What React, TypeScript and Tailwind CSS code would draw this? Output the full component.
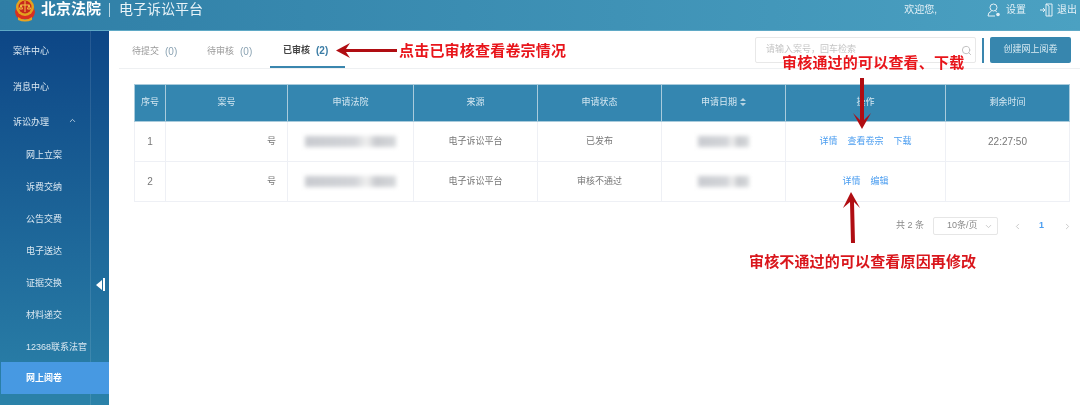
import { ChevronDown, ChevronLeft, ChevronRight, ChevronUp, Search } from "lucide-react";

const menu = ["网上立案", "诉费交纳", "公告交费", "电子送达", "证据交换", "材料递交", "12368联系法官"];

const columns = [
  { label: "序号", width: "w-[31px]" },
  { label: "案号", width: "w-[122px]" },
  { label: "申请法院", width: "w-[126px]" },
  { label: "来源", width: "w-[124px]" },
  { label: "申请状态", width: "w-[124px]" },
  { label: "申请日期", width: "w-[124px]" },
  { label: "操作", width: "w-[160px]" },
  { label: "剩余时间", width: "w-[124px]" },
];

const rows = [
  { id: 1, status: "已发布", links: ["详情", "查看卷宗", "下载"], time: "22:27:50" },
  { id: 2, status: "审核不通过", links: ["详情", "编辑"], time: "" },
];

const Emblem = () => (
  <svg viewBox="0 0 22 24" className="w-[22px] h-[24px] shrink-0">
    <path d="M3 6 L1 14 Q2 20 6 21 L16 21 Q20 20 21 14 L19 6 Z" fill="#d9301f" />
    <circle cx="11" cy="9" r="9" fill="#e3a21f" />
    <circle cx="11" cy="9" r="6.5" fill="#c8281c" />
    <path d="M11 3 V14 M6.5 7 H15.5 M7 7 L5.5 11 H8.5 Z M15 7 L13.5 11 H16.5 Z" stroke="#f4c542" strokeWidth="1" fill="none" />
    <path d="M4 19 Q11 24 18 19 L18 22 Q11 25 4 22 Z" fill="#e9a41f" />
  </svg>
);

const UserIcon = () => (
  <svg viewBox="0 0 14 14" className="w-[14px] h-[14px] mr-[5px]" fill="none" stroke="#e3f0f6" strokeWidth="1">
    <circle cx="6.5" cy="4.5" r="3.5" />
    <path d="M1 13 Q1 9 4.5 8.2 M8.5 8.2 Q9.5 8.5 10 9 M1 13 H8" />
    <circle cx="11" cy="11.5" r="1.8" fill="#e3f0f6" stroke="none" />
  </svg>
);

const ExitIcon = () => (
  <svg viewBox="0 0 13 14" className="w-[13px] h-[14px] mr-[4px]" fill="none" stroke="#e3f0f6" strokeWidth="1">
    <path d="M6 1 H12 V13 H6 Z M6 1 L9 3 V13" />
    <path d="M0 7 H5 M3 5 L5 7 L3 9" />
  </svg>
);

const SortIcon = () => (
  <svg viewBox="0 0 6 8" className="inline-block w-[6px] h-[8px] ml-[3px] mb-px" fill="#b8d4e2">
    <path d="M3 0 L6 3 H0 Z M3 8 L0 5 H6 Z" />
  </svg>
);

const Blur = ({ w }: { w: string }) => (
  <div className={`${w} h-[11px] mx-auto bg-[linear-gradient(90deg,#c9cbd0_0%,#d2d4d8_55%,#f0f0f0_68%,#c8cace_78%,#d6d8db_100%)] blur-[2px]`} />
);

const App = () => {
  return (
    <div className="relative w-[1080px] h-[405px] overflow-hidden bg-white text-[9px] text-[#777] blur-[0.3px] font-['Liberation_Sans','Noto_Sans_CJK_SC',sans-serif]">
      <header className="h-[31px] flex items-center justify-between pl-[14px] pr-[3px] pb-[11px] bg-[linear-gradient(90deg,#2f7ea6,#4ba1c2)] border-b border-[#5fa9c6] text-white">
        <div className="flex items-center">
          <Emblem />
          <span className="ml-[5px] text-[15px] font-bold">北京法院</span>
          <span className="ml-[8px] mr-[9px] w-px h-[14px] bg-[#b8d8e6]" />
          <span className="text-[14px] text-[#e8f3f8]">电子诉讼平台</span>
        </div>
        <div className="flex items-center text-[10px] text-[#e3f0f6]">
          <span className="mr-[50px]">欢迎您,</span>
          <UserIcon />
          <span className="mr-[14px]">设置</span>
          <ExitIcon />
          <span>退出</span>
        </div>
      </header>

      <div className="flex h-[374px]">
        <aside className="relative w-[109px] shrink-0 pl-px bg-[linear-gradient(180deg,#0d4686,#2b82a9)] text-[#dbe8f2]">
          <div className="absolute top-0 bottom-0 left-[90px] w-px bg-white/10" />
          <div className="h-[37px] pl-[12px] pt-[2px] mt-px flex items-center">案件中心</div>
          <div className="h-[36px] pl-[12px] pt-[2px] flex items-center">消息中心</div>
          <div className="h-[33px] pl-[12px] pt-[3px] flex items-center">
            诉讼办理
            <ChevronUp size={9} className="ml-[19px] mb-[5px]" />
          </div>
          {menu.map((item) => (
            <div key={item} className="h-[32px] pl-[25px] pt-[4px] flex items-center whitespace-nowrap">
              {item}
            </div>
          ))}
          <div className="relative h-[32px] pl-[25px] pt-[2px] flex items-center bg-[#4799e2] text-white font-bold">网上阅卷</div>
          <div className="absolute left-[96px] top-[247px] flex items-center gap-px">
            <div className="border-y-[5px] border-y-transparent border-r-[6px] border-r-white" />
            <div className="w-[2px] h-[13px] bg-white" />
          </div>
        </aside>

        <main className="flex-1 min-w-0">
          <div className="h-[38px] ml-[10px] flex items-start justify-between border-b border-[#eef0f2] pr-[9px]">
            <div className="flex pt-[6px] text-[#9a9a9a]">
              <div className="h-[31px] w-[75px] pl-[13px] pb-[2px] flex items-center">待提交<span className="ml-[6px] text-[10px] text-[#8ba3b3]">(0)</span></div>
              <div className="h-[31px] w-[76px] pl-[13px] pb-[2px] flex items-center">待审核<span className="ml-[6px] text-[10px] text-[#8ba3b3]">(0)</span></div>
              <div className="h-[31px] w-[75px] pl-[13px] pb-[2px] flex items-center border-b-[2px] border-[#3a86ae] text-[#444] font-bold">已审核<span className="ml-[6px] text-[10px] text-[#3a7ca5]">(2)</span></div>
            </div>
            <div className="flex items-center pt-[6px]">
              <div className="w-[221px] h-[26px] flex items-center justify-between pl-[10px] pr-[3px] border border-[#e8e8e8] rounded-[2px] text-[#c4c4c4]">
                请输入案号，回车检索
                <Search size={11} className="text-[#bbb]" />
              </div>
              <div className="ml-[6px] w-[2px] h-[25px] bg-[#3a86ae]" />
              <button className="ml-[6px] w-[81px] h-[26px] rounded-[2px] bg-[#3786ae] text-[#d9ebf3]">创建网上阅卷</button>
            </div>
          </div>

          <div className="ml-[25px] mt-[15px] w-[936px]">
            <table className="w-full table-fixed border-collapse">
              <thead>
                <tr className="h-[37px] bg-[#3486b0] text-[#d6e8f2]">
                  {columns.map((col) => (
                    <th key={col.label} className={`${col.width} font-normal border border-[#a9cbdc]`}>
                      {col.label}
                      {col.label === "申请日期" && <SortIcon />}
                    </th>
                  ))}
                </tr>
              </thead>
              <tbody>
                {rows.map((row) => (
                  <tr key={row.id} className="h-[40px] text-center">
                    <td className="border border-[#eef0f5] text-[10px]">{row.id}</td>
                    <td className="border border-[#eef0f5] text-right pr-[11px]">号</td>
                    <td className="border border-[#eef0f5]"><Blur w="w-[91px]" /></td>
                    <td className="border border-[#eef0f5]">电子诉讼平台</td>
                    <td className="border border-[#eef0f5]">{row.status}</td>
                    <td className="border border-[#eef0f5]"><Blur w="w-[51px]" /></td>
                    <td className="border border-[#eef0f5] text-[#4a9df0]">
                      <div className="flex justify-center gap-[10px]">
                        {row.links.map((link) => (
                          <span key={link}>{link}</span>
                        ))}
                      </div>
                    </td>
                    <td className="border border-[#eef0f5] text-[10px]">{row.time}</td>
                  </tr>
                ))}
              </tbody>
            </table>
          </div>

          <div className="mt-[15px] w-[963px] flex items-center justify-end">
            <span className="mr-[9px] text-[#888]">共 2 条</span>
            <div className="w-[65px] h-[18px] flex items-center justify-between pl-[13px] pr-[4px] border border-[#e6e6e6] rounded-[2px] text-[#888]">
              10条/页
              <ChevronDown size={9} className="text-[#bbb]" />
            </div>
            <ChevronLeft size={9} className="ml-[15px] text-[#bbb]" />
            <span className="ml-[17px] text-[#4a9df0] font-bold">1</span>
            <ChevronRight size={9} className="ml-[19px] text-[#bbb]" />
          </div>
        </main>
      </div>

      {/* annotations drawn over the page */}
      <svg className="absolute inset-0 pointer-events-none" width="1080" height="405" viewBox="0 0 1080 405">
        <g fill="#b00d12">
          <path d="M397 49 L346 49 L350 43 L336 50.5 L350 58 L346 52 L397 52 Z" />
          <path d="M860 78 L864 78 L864 120 L871 113 L862 129 L853 113 L860 120 Z" />
          <path d="M851 243 L855 243 L854 202 L860 208 L851 192 L843 208 L850 202 Z" />
        </g>
      </svg>
      <div className="absolute left-[399px] top-[41px] text-[15px] leading-[20px] tracking-[0.2px] font-bold text-[#e8151b] whitespace-nowrap">点击已审核查看卷宗情况</div>
      <div className="absolute left-[782px] top-[53px] text-[15px] leading-[20px] tracking-[0.2px] font-bold text-[#e8151b] whitespace-nowrap">审核通过的可以查看、下载</div>
      <div className="absolute left-[749px] top-[252px] text-[15px] leading-[20px] tracking-[0.15px] font-bold text-[#d9161c] whitespace-nowrap">审核不通过的可以查看原因再修改</div>
    </div>
  );
};

export default App;
